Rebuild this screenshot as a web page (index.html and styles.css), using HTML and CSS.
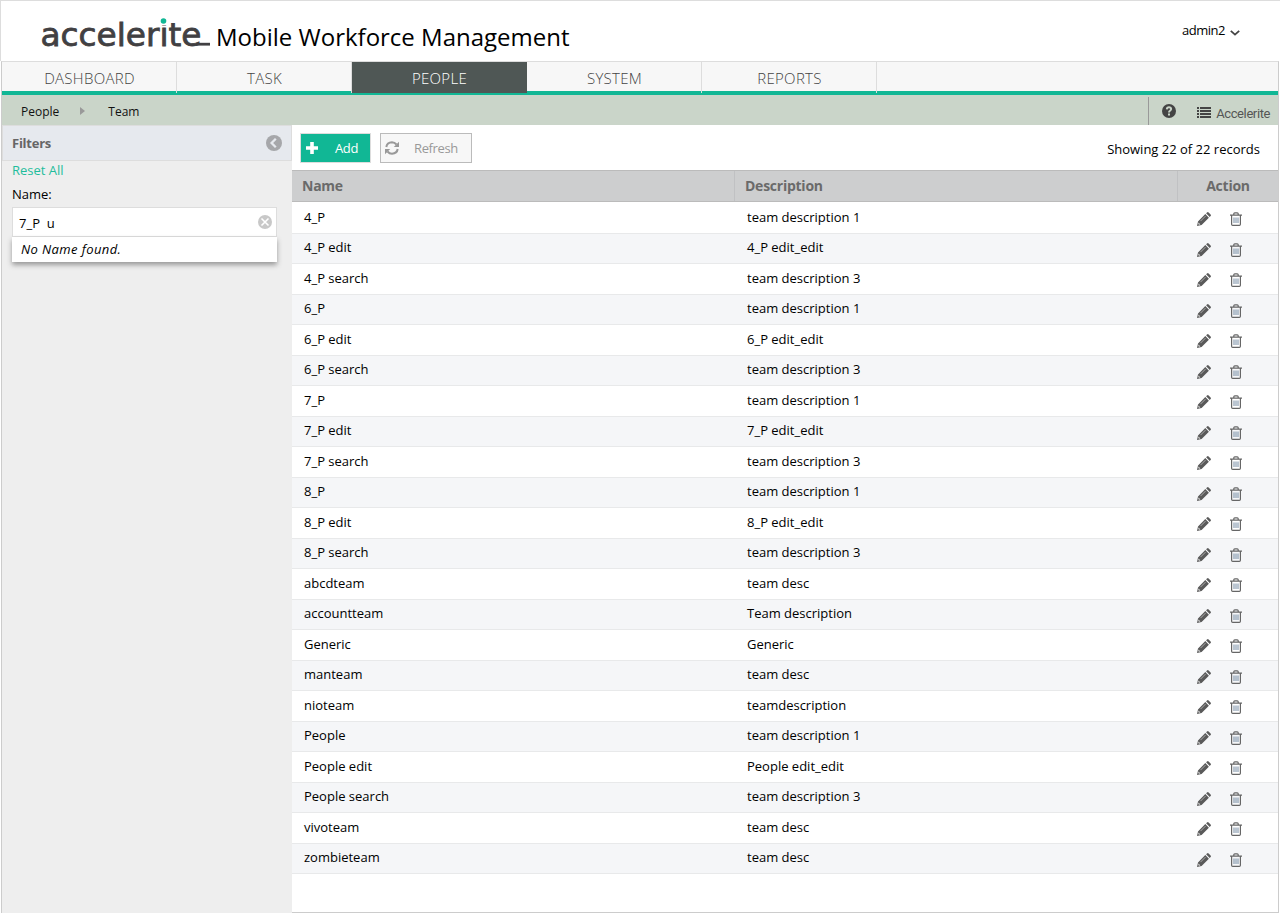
FILE: index.html
```
<!DOCTYPE html>
<html lang="en">
<head>
<meta charset="utf-8">
<title>Mobile Workforce Management</title>
<link rel="stylesheet" href="styles.css">
</head>
<body>
<svg class="symbols" aria-hidden="true">
  <symbol id="pencil" viewBox="0 0 14 14">
    <path fill="#5a5a5a" d="M0 14l1-4.600L8.300 2.100l3.600 3.600L4.600 13zM9.100 1.300l.9-.9q.8-.7 1.600 0l2 2q.7.800 0 1.600l-.9.900z"/>
    <path fill="none" stroke="#ccc" stroke-width=".7" d="M3.500 9.100l5-5"/>
    <path fill="#ddd" d="M1.600 10.600l1.800 1.800-1.300.4-.9-.9z"/>
  </symbol>
  <symbol id="trash" viewBox="0 0 12 14">
    <path fill="none" stroke="#666" stroke-width="1.200" d="M0 3.200h12M3.800 3V1.700q0-.9 1-.9h2.400q1 0 1 .9V3M1.600 3.400v8.800q0 1.200 1.100 1.200h6.600q1.100 0 1.100-1.200V3.400"/>
    <path fill="none" stroke="#667f98" stroke-width=".9" d="M4 5.500v5.500M6 5.500v5.500M8 5.500v5.500"/>
  </symbol>
</svg>
<header class="top">
  <div class="brand">
    <svg class="logo" width="172" height="40" viewBox="0 0 172 40">
      <text class="logo-text" x="-.5" y="29.500" textLength="161" lengthAdjust="spacingAndGlyphs">accelerite</text>
      <rect x="117" y="1" width="9" height="8.500" fill="#fff"/>
      <circle cx="122.500" cy="5" r="2.800" fill="#11b795"/>
      <path d="M155 28.200h14" stroke="#414042" stroke-width="2.800"/>
    </svg>
    <span class="product">Mobile Workforce Management</span>
  </div>
  <div class="user"><span>admin2</span><svg width="10" height="6" viewBox="0 0 10 6"><path d="M.8.800L5 4.600 9.200.800" fill="none" stroke="#444" stroke-width="1.800"/></svg></div>
</header>
<div class="frame">
  <nav class="tabs">
    <a>DASHBOARD</a><a>TASK</a><a class="active">PEOPLE</a><a>SYSTEM</a><a>REPORTS</a>
  </nav>
  <div class="crumbs">
    <span>People</span>
    <svg class="arrow" width="5" height="8" viewBox="0 0 5 8"><path d="M0 0l5 4-5 4z" fill="#999"/></svg>
    <span>Team</span>
    <div class="tools">
      <svg class="help" width="14" height="14" viewBox="0 0 14 14"><circle cx="7" cy="7" r="7" fill="#444"/><path d="M4.800 5.300Q5 3.300 7 3.300t2.200 1.800Q9.200 6 8 6.700 7 7.300 7 8.500" fill="none" stroke="#cad5c9" stroke-width="1.900"/><path d="M6 9.600h2v1.800H6z" fill="#cad5c9"/></svg>
      <svg class="list" width="14" height="11" viewBox="0 0 14 11"><path d="M0 1h2M0 4h2M0 7h2M0 10h2M3 1h11M3 4h11M3 7h11M3 10h11" stroke="#444" stroke-width="2"/></svg>
      <span class="org">Accelerite</span>
    </div>
  </div>
  <div class="body">
    <aside class="filters">
      <div class="filters-head"><b>Filters</b>
        <svg width="16" height="16" viewBox="0 0 16 16"><circle cx="8" cy="8" r="8" fill="#a6a7aa"/><path d="M9.800 3.800L5.600 8l4.200 4.200" fill="none" stroke="#e6e9ee" stroke-width="2.300"/></svg>
      </div>
      <div class="filters-form">
        <a class="reset">Reset All</a>
        <label>Name:</label>
        <div class="field"><span>7_P&nbsp; u</span>
          <svg width="14" height="14" viewBox="0 0 14 14"><circle cx="7" cy="7" r="7" fill="#c8c8c8"/><path d="M3.500 3.500l7 7M10.500 3.500l-7 7" stroke="#fff" stroke-width="1.600"/></svg>
        </div>
        <div class="suggest">No Name found.</div>
      </div>
    </aside>
    <main class="content">
      <div class="toolbar">
        <button class="btn add"><svg width="12" height="12" viewBox="0 0 12 12"><path d="M6 0v12M0 6h12" stroke="#fff" stroke-width="3.600"/></svg><span>Add</span></button>
        <button class="btn refresh"><svg width="14" height="14" viewBox="0 0 14 14"><path d="M1.300 6Q2 1.500 7 1.300q2.600 0 4.500 2.200M12.700 8Q12 12.500 7 12.700q-2.600 0-4.500-2.200" fill="none" stroke="#999" stroke-width="2"/><path d="M14 .8V6H8.800zM0 13.200V8h5.200z" fill="#999"/></svg><span>Refresh</span></button>
        <span class="count">Showing 22 of 22 records</span>
      </div>
      <div class="thead"><span>Name</span><span>Description</span><span>Action</span></div>
      <div class="rows" id="rows"></div>
    </main>
  </div>
</div>
<script src="rows.js"></script>
</body>
</html>
```
FILE: styles.css
```
* { box-sizing: border-box; }
body {
  margin: 0;
  height: 913px;
  overflow: hidden;
  background: #fff;
  color: #000;
  font: 13px/18px "Open Sans", sans-serif;
  display: flex;
  flex-direction: column;
}
.symbols { display: none; }
svg { display: block; flex: none; }
.top {
  height: 61px;
  flex: none;
  border-top: 1px solid #ddd;
  border-left: 1px solid #ddd;
  display: flex;
  justify-content: space-between;
  padding: 15px 39px 0 40px;
}
.brand { display: flex; }
.logo { overflow: visible; }
.logo-text { font: 32px "DejaVu Sans", sans-serif; fill: #414042; stroke: #414042; stroke-width: .8; }
.product { font-size: 24px; line-height: 34px; margin: 4px 0 0 3px; white-space: nowrap; }
.user { display: flex; align-items: center; gap: 5px; height: 18px; margin-top: 5px; }
.user span { letter-spacing: -.5px; }
.user svg { margin-top: 5px; margin-right: 1px; }
.frame {
  flex: 1;
  margin: 0 1px;
  border: 1px solid #ccc;
  border-top-color: #ddd;
  display: flex;
  flex-direction: column;
}
.tabs { height: 33px; flex: none; background: linear-gradient(#f7f7f7 29px, #11b795 29px); display: flex; }
.tabs a {
  width: 175px;
  height: 31px;
  border-right: 1px solid #ddd;
  text-align: center;
  font-size: 15px;
  font-weight: 300;
  letter-spacing: .3px;
  text-indent: 1px;
  line-height: 32px;
  color: #444;
}
.tabs .active { background: #4f5755; color: #fff; border-color: #4f5755; }
.crumbs {
  height: 30px;
  flex: none;
  background: #cad5c9;
  display: flex;
  align-items: center;
  padding-left: 19px;
  font-size: 12px;
  color: #111;
}
.crumbs > span { margin-top: 3px; }
.arrow { margin: 2px 23px 0 21px; }
.tools {
  margin-left: auto;
  align-self: flex-end;
  height: 28px;
  border-left: 1px solid #999;
  display: flex;
  padding: 7px 8px 0 13px;
}
.list { margin: 3px 5px 0 21px; }
.org { font: 13px/20px Roboto, sans-serif; color: #555; letter-spacing: -.4px; }
.body { flex: 1; display: flex; min-height: 0; }
.filters { width: 290px; flex: none; background: #eee; margin-bottom: -1px; }
.filters-head {
  height: 36px;
  background: #e6e9ee;
  border: 1px solid #ddd;
  display: flex;
  align-items: center;
  justify-content: space-between;
  padding: 0 9px;
  color: #666;
}
.filters-head b { letter-spacing: -.25px; }
.filters-form { padding: 0 15px 0 10px; display: flex; flex-direction: column; }
.reset { color: #1fbd9c; }
label { margin: 6px 0 4px; }
.field {
  height: 30px;
  background: #fff;
  border: 1px solid #ddd;
  display: flex;
  justify-content: space-between;
  align-items: center;
  padding: 1px 4px 0 6px;
}
.field svg { margin-bottom: 2px; }
.suggest {
  height: 25px;
  background: #fff;
  box-shadow: 0 3px 5px #999;
  font-style: italic;
  letter-spacing: .4px;
  line-height: 25px;
  padding-left: 9px;
}
.content { flex: 1; }
.toolbar { height: 45px; display: flex; align-items: flex-start; padding: 8px 18px 0 8px; }
.btn {
  height: 30px;
  border: 1px solid #ddd;
  display: flex;
  align-items: center;
  justify-content: space-between;
  font: 13px/18px "Open Sans", sans-serif;
}
.add { width: 71px; padding: 0 12px 0 5px; background: #11b795; color: #fff; margin-right: 9px; }
.refresh { width: 92px; padding: 0 13px 0 4px; background: #f7f7f7; border-color: #bbb; color: #999; }
.btn span { letter-spacing: -.35px; }
.count { margin: 7px 0 0 auto; }
.thead {
  height: 32px;
  background: #cdcecf;
  border: solid #bbb;
  border-width: 1px 0;
  display: grid;
  grid-template-columns: 443px 443px 1fr;
  font-size: 14px;
  font-weight: 700;
  letter-spacing: -.25px;
  line-height: 30px;
  color: #6a6a6a;
}
.thead span { padding-left: 10px; border-right: 1px solid #c0c1c3; }
.thead span:last-child { padding: 0; text-align: center; border: 0; }
.rows { padding-top: 1px; }
.row {
  height: 30.5px;
  border-bottom: 1px solid #e8e9ea;
  display: grid;
  grid-template-columns: 443px 443px 1fr;
  padding-top: 4.700px;
}
.row:nth-child(even) { background: #f5f6f8; }
.row span { padding-left: 12px; }
.actions { display: flex; gap: 19px; padding: 4.600px 0 0 19px; }
```
FILE: rows.js
```
const teams = [
  ["4_P", "team description 1"], ["4_P edit", "4_P edit_edit"], ["4_P search", "team description 3"],
  ["6_P", "team description 1"], ["6_P edit", "6_P edit_edit"], ["6_P search", "team description 3"],
  ["7_P", "team description 1"], ["7_P edit", "7_P edit_edit"], ["7_P search", "team description 3"],
  ["8_P", "team description 1"], ["8_P edit", "8_P edit_edit"], ["8_P search", "team description 3"],
  ["abcdteam", "team desc"], ["accountteam", "Team description"], ["Generic", "Generic"],
  ["manteam", "team desc"], ["nioteam", "teamdescription"],
  ["People", "team description 1"], ["People edit", "People edit_edit"], ["People search", "team description 3"],
  ["vivoteam", "team desc"], ["zombieteam", "team desc"]
];
document.getElementById("rows").innerHTML = teams.map(([name, desc]) =>
  `<div class="row"><span>${name}</span><span>${desc}</span><div class="actions">` +
  `<svg width="14" height="14"><use href="#pencil"/></svg><svg width="12" height="14"><use href="#trash"/></svg></div></div>`
).join("");
```
